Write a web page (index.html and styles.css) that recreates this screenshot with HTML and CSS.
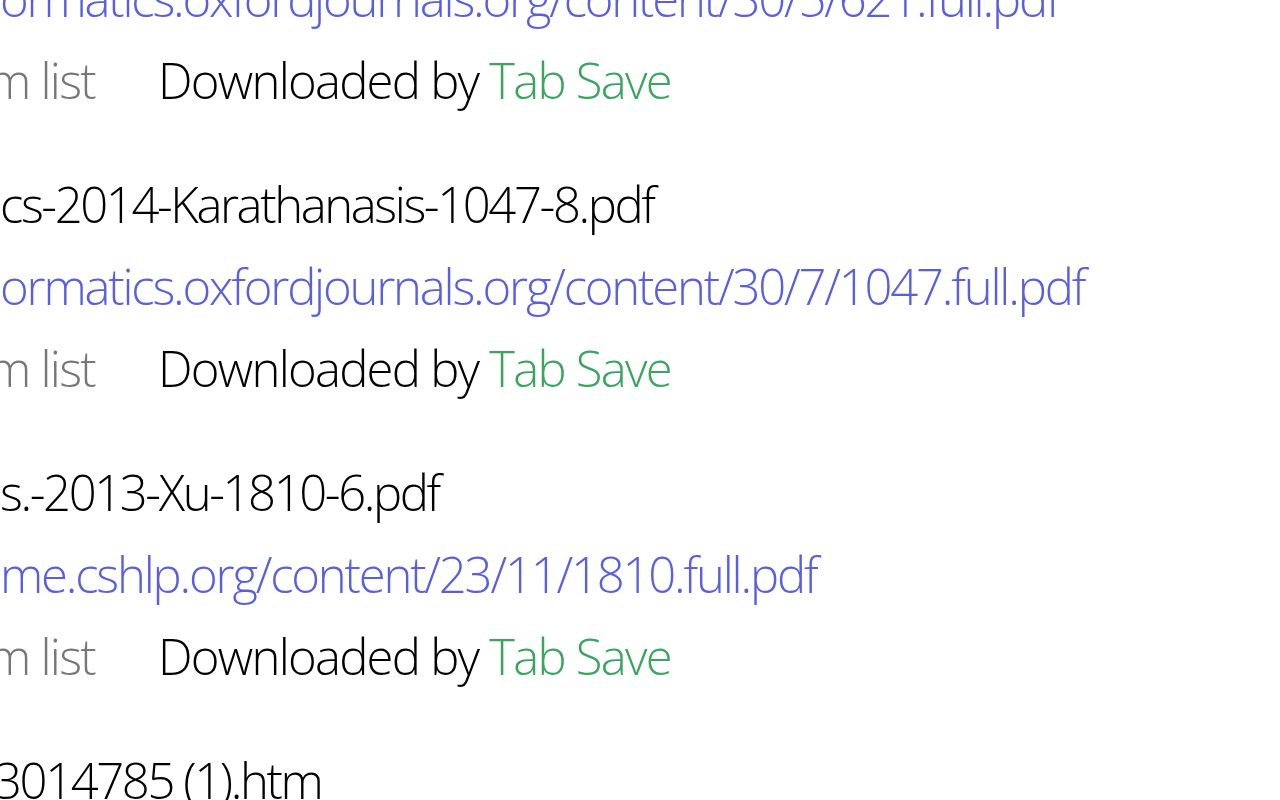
FILE: index.html
```html
<!DOCTYPE html>
<html lang="en">
<head>
<meta charset="utf-8">
<title>Downloads</title>
<link rel="stylesheet" href="styles.css">
</head>
<body>
<main class="downloads">
  <div class="item">
    <div class="name">nformatics-2014-Xyz-621-8.pdf</div>
    <a class="url" href="#">ormatics.oxfordjournals.org/content/30/5/621.full.pdf</a>
    <div class="controls"><a class="remove" href="#">m list</a><span class="by">Downloaded by <a class="ext" href="#">Tab Save</a></span></div>
  </div>
  <div class="item">
    <div class="name">cs-2014-Karathanasis-1047-8.pdf</div>
    <a class="url" href="#">ormatics.oxfordjournals.org/content/30/7/1047.full.pdf</a>
    <div class="controls"><a class="remove" href="#">m list</a><span class="by">Downloaded by <a class="ext" href="#">Tab Save</a></span></div>
  </div>
  <div class="item">
    <div class="name">s.-2013-Xu-1810-6.pdf</div>
    <a class="url" href="#">me.cshlp.org/content/23/11/1810.full.pdf</a>
    <div class="controls"><a class="remove" href="#">m list</a><span class="by">Downloaded by <a class="ext" href="#">Tab Save</a></span></div>
  </div>
  <div class="item">
    <div class="name cut">3014785 (1).htm</div>
  </div>
</main>
</body>
</html>
```
FILE: styles.css
```css
html, body {
  margin: 0;
  padding: 0;
  background: #ffffff;
  overflow: hidden;
}
.downloads {
  display: flex;
  flex-direction: column;
  gap: 42px;
  margin-top: -125px;
  font-family: "Open Sans", "Liberation Sans", sans-serif;
  font-weight: 300;
  font-size: 49px;
  line-height: 82px;
  white-space: nowrap;
}
.item {
  display: flex;
  flex-direction: column;
}
.name {
  color: #000000;
  letter-spacing: -2.4px;
}
.name.cut {
  margin-left: -6px;
}
.url {
  display: block;
  color: #5a5fde;
  text-decoration: none;
  letter-spacing: -2.2px;
}
.controls {
  display: flex;
  letter-spacing: -1.75px;
}
.remove {
  color: #777777;
  text-decoration: none;
  width: 170px;
  margin-left: -12px;
  flex: none;
}
.by {
  color: #000000;
}
.ext {
  color: #3aa55e;
  text-decoration: none;
}
```
